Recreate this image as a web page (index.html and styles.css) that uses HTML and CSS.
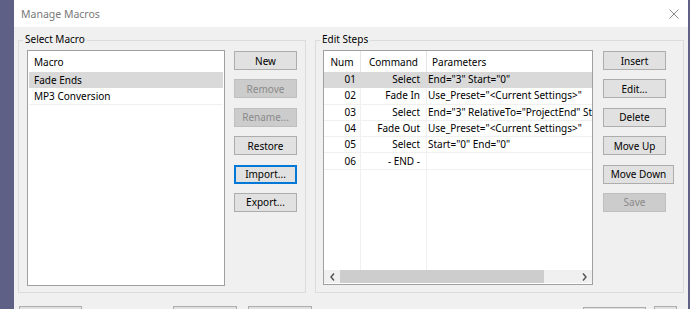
FILE: index.html
```html
<!DOCTYPE html>
<html lang="en">
<head>
    <meta charset="UTF-8">
    <title>Manage Macros</title>
    <link rel="stylesheet" href="styles.css">
</head>
<body>
    <div class="dialog">
        <div class="titlebar">
            <span class="titlebar__text">Manage Macros</span>
            <svg class="titlebar__close" width="10" height="10" viewBox="0 0 10 10">
                <path d="M0.5 0.5 L9.5 9.5 M9.5 0.5 L0.5 9.5" stroke="#8c8c8c" stroke-width="1" fill="none"/>
            </svg>
        </div>

        <div class="dialog__body">
            <fieldset class="group group--macros">
                <legend class="group__title">Select Macro</legend>
                <div class="group__body">
                    <div class="listbox">
                        <div class="listbox__head">Macro</div>
                        <div class="listbox__row listbox__row--selected">Fade Ends</div>
                        <div class="listbox__row">MP3 Conversion</div>
                    </div>
                    <div class="buttons">
                        <button class="btn">New</button>
                        <button class="btn btn--disabled">Remove</button>
                        <button class="btn btn--disabled">Rename...</button>
                        <button class="btn">Restore</button>
                        <button class="btn btn--focus">Import...</button>
                        <button class="btn">Export...</button>
                    </div>
                </div>
            </fieldset>

            <fieldset class="group group--steps">
                <legend class="group__title">Edit Steps</legend>
                <div class="group__body">
                    <div class="listview">
                        <div class="listview__body">
                            <table class="steps">
                                <colgroup>
                                    <col class="steps__num">
                                    <col class="steps__cmd">
                                    <col class="steps__params">
                                </colgroup>
                                <tr class="steps__head">
                                    <th>Num</th>
                                    <th>Command</th>
                                    <th class="steps__left">Parameters</th>
                                </tr>
                                <tr class="steps__row steps__row--selected">
                                    <td>01</td><td>Select</td><td>End="3" Start="0"</td>
                                </tr>
                                <tr class="steps__row">
                                    <td>02</td><td>Fade In</td><td>Use_Preset="&lt;Current Settings&gt;"</td>
                                </tr>
                                <tr class="steps__row">
                                    <td>03</td><td>Select</td><td>End="3" RelativeTo="ProjectEnd" Start="0"</td>
                                </tr>
                                <tr class="steps__row">
                                    <td>04</td><td>Fade Out</td><td>Use_Preset="&lt;Current Settings&gt;"</td>
                                </tr>
                                <tr class="steps__row">
                                    <td>05</td><td>Select</td><td>Start="0" End="0"</td>
                                </tr>
                                <tr class="steps__row">
                                    <td>06</td><td>- END -</td><td></td>
                                </tr>
                                <tr class="steps__filler">
                                    <td></td><td></td><td></td>
                                </tr>
                            </table>
                        </div>
                        <div class="hscroll">
                            <div class="hscroll__arrow">
                                <svg width="5" height="8" viewBox="0 0 5 8"><path d="M4 0.5 L1 4 L4 7.5" stroke="#505050" stroke-width="1.4" fill="none"/></svg>
                            </div>
                            <div class="hscroll__track">
                                <div class="hscroll__thumb"></div>
                            </div>
                            <div class="hscroll__arrow">
                                <svg width="5" height="8" viewBox="0 0 5 8"><path d="M1 0.5 L4 4 L1 7.5" stroke="#505050" stroke-width="1.4" fill="none"/></svg>
                            </div>
                        </div>
                    </div>
                    <div class="buttons buttons--steps">
                        <button class="btn">Insert</button>
                        <button class="btn">Edit...</button>
                        <button class="btn">Delete</button>
                        <button class="btn">Move Up</button>
                        <button class="btn btn--wide">Move Down</button>
                        <button class="btn btn--disabled">Save</button>
                    </div>
                </div>
            </fieldset>
        </div>

        <div class="dialog__footer">
            <button class="btn">Shrink</button>
            <span class="dialog__label">Apply Macro to:</span>
            <button class="btn btn--footer">Project</button>
            <button class="btn btn--footer">Files...</button>
            <button class="btn btn--close">Close</button>
            <button class="btn btn--help">
                <svg width="17" height="17" viewBox="0 0 17 17"><circle cx="8.5" cy="8.5" r="8" fill="#3d8ee8"/></svg>
            </button>
        </div>
    </div>
</body>
</html>
```

FILE: styles.css
```css
html, body{
    margin: 0;
    height: 100%;
}

body{
    background: #5e6086;
    overflow: hidden;
    font-family: "Noto Sans", sans-serif;
    font-size: 10px;
    color: #000;
}

.dialog{
    margin-left: 14px;
    width: 674px;
    height: 100%;
    overflow: hidden;
    background: #f0f0f0;
}

.titlebar{
    height: 27px;
    background: #fff;
    display: flex;
    align-items: center;
    justify-content: space-between;
    padding: 0 9px 0 7px;
}
.titlebar__text{
    color: #7a7a7a;
    font-size: 10.5px;
}

.dialog__body{
    display: flex;
    gap: 9px;
    padding: 5px 4px 0;
}

.group{
    margin: 0;
    padding: 0;
    min-width: 0;
    border: 1px solid #dcdcdc;
    box-sizing: border-box;
}
.group--macros{
    width: 288px;
}
.group--steps{
    width: 369px;
}
.group__title{
    margin-left: 4px;
    padding: 0 2px 2px;
    line-height: 14px;
}
.group__body{
    display: flex;
    align-items: flex-start;
    gap: 9px;
    padding: 2px 8px 6px;
}
.group--steps .group__body{
    gap: 10px;
    padding-left: 7px;
}

/* left list */
.listbox{
    width: 198px;
    height: 236px;
    box-sizing: border-box;
    padding: 1px;
    background: #fff;
    border: 1px solid #a0a0a0;
}
.listbox__head{
    height: 20px;
    line-height: 20px;
    padding-left: 5px;
}
.listbox__row{
    height: 16.3px;
    line-height: 16px;
    padding-left: 5px;
    box-sizing: border-box;
    border-bottom: 1px solid #f0f0f0;
}
.listbox__row--selected{
    background: #d9d9d9;
    border-bottom-color: #d9d9d9;
}

/* buttons */
.buttons{
    display: flex;
    flex-direction: column;
    align-items: flex-start;
    gap: 9.4px;
    padding-top: 1px;
}
.btn{
    width: 63px;
    height: 19px;
    box-sizing: border-box;
    padding: 0;
    font: inherit;
    line-height: 16px;
    color: #000;
    background: #e1e1e1;
    border: 1px solid #adadad;
}
.btn--disabled{
    background: #cccccc;
    border-color: #bfbfbf;
    color: #8a8a8a;
}
.btn--focus{
    border: 2px solid #0078d7;
    line-height: 14px;
}
.btn--wide{
    width: 71px;
}

/* steps list */
.listview{
    width: 270px;
    height: 235px;
    box-sizing: border-box;
    background: #fff;
    border: 1px solid #a0a0a0;
    display: flex;
    flex-direction: column;
}
.listview__body{
    height: 219px;
    overflow: hidden;
}
.steps{
    table-layout: fixed;
    width: 420px;
    height: 100%;
    border-spacing: 0;
    border-collapse: separate;
}
.steps__num{
    width: 37px;
}
.steps__cmd{
    width: 66px;
}
.steps th{
    height: 21px;
    padding: 0;
    font-weight: normal;
    text-align: center;
    border-right: 1px solid #e5e5e5;
}
.steps th.steps__left{
    text-align: left;
    padding-left: 5px;
}
.steps__row{
    height: 16.3px;
}
.steps td{
    padding: 0;
    line-height: 15px;
    white-space: nowrap;
    overflow: hidden;
    border-right: 1px solid #f0f0f0;
}
.steps__row td{
    border-bottom: 1px solid #f0f0f0;
}
.steps__row td:nth-child(1){
    text-align: right;
    padding-right: 4px;
}
.steps__row td:nth-child(2){
    text-align: right;
    padding-right: 6px;
}
.steps__row td:nth-child(3){
    padding-left: 1px;
}
.steps__row--selected td{
    background: #d9d9d9;
    border-color: #d9d9d9;
}

.hscroll{
    height: 13px;
    display: flex;
    background: #f0f0f0;
}
.hscroll__arrow{
    width: 16px;
    display: flex;
    align-items: center;
    justify-content: center;
}
.hscroll__track{
    flex: 1;
}
.hscroll__thumb{
    width: 204px;
    height: 100%;
    background: #cdcdcd;
}

/* footer */
.dialog__footer{
    display: flex;
    align-items: flex-start;
    padding: 13px 11px 0 5px;
}
.dialog__label{
    width: 91px;
    padding-top: 6px;
    text-align: center;
}
.btn--footer{
    width: 64px;
}
.btn--footer + .btn--footer{
    margin-left: 11px;
}
.btn--close{
    margin-left: auto;
    margin-top: 1px;
}
.btn--help{
    width: 23px;
    height: 22px;
    margin-left: 8px;
    padding-top: 2px;
}
```
